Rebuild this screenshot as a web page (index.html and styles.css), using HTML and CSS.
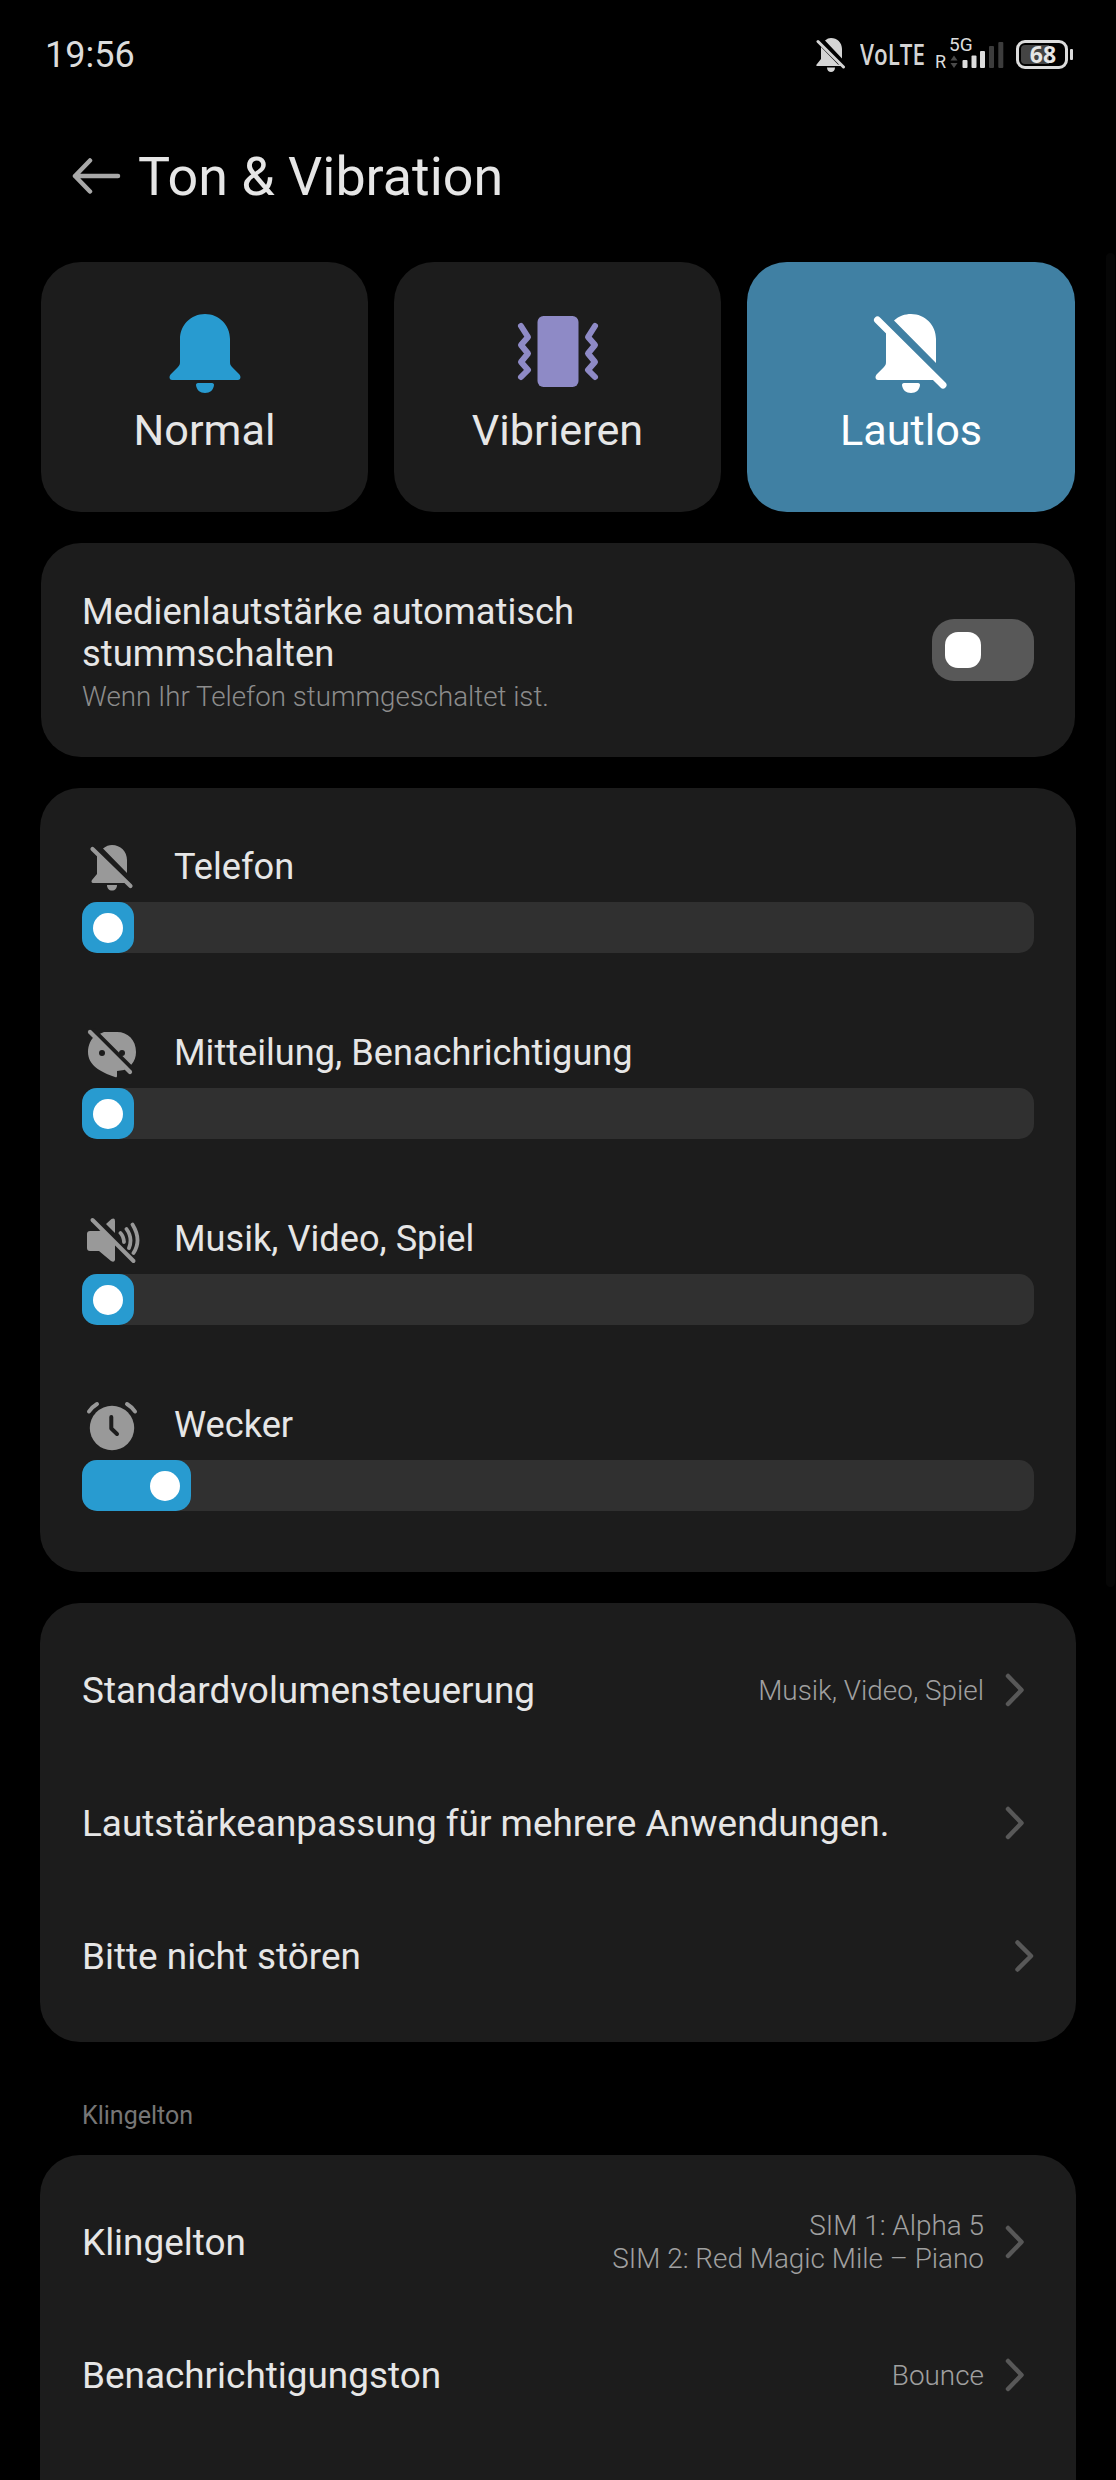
FILE: index.html
```html
<!DOCTYPE html>
<html lang="de">
<head>
    <meta charset="UTF-8">
    <meta name="viewport" content="width=device-width, initial-scale=1.0">
    <title>Ton &amp; Vibration</title>
    <link rel="stylesheet" href="styles.css">
</head>
<body>
    <!-- Status bar -->
    <div class="status-bar">
        <span class="time">19:56</span>
        <div class="status-icons">
            <svg class="status-bell" width="30" height="34" viewBox="0 0 30 34">
                <path d="M9 2.500C11 0.800 13 0 15 0C21 0 26 4.500 26 11V20.500ZM5 9L22 26.500H25V28H1C0 28 0 27 1 26L5 21Z" fill="#d4d4d4"/>
                <path d="M2 3.500L27.500 29" stroke="#d4d4d4" stroke-width="3" stroke-linecap="round"/>
                <path d="M11 29.500H19C19 32.500 17 34 15 34C13 34 11 32.500 11 29.500Z" fill="#d4d4d4"/>
            </svg>
            <span class="volte">VoLTE</span>
            <div class="signal">
                <span class="roaming">R</span>
                <span class="network">5G</span>
                <svg width="54" height="28" viewBox="0 0 54 28">
                    <path d="M0.500 19.500L4 14.500L7.500 19.500ZM0.500 22L4 27L7.500 22Z" fill="#4a4a4a"/>
                    <rect x="12.500" y="19" width="5" height="8" rx="1" fill="#dcdcdc"/>
                    <rect x="21.500" y="14.500" width="5" height="12.500" rx="1" fill="#dcdcdc"/>
                    <rect x="30" y="10" width="5" height="17" rx="1" fill="#dcdcdc"/>
                    <rect x="39" y="5" width="5" height="22" rx="1" fill="#3c3c3c"/>
                    <rect x="48.300" y="1" width="5" height="26" rx="1" fill="#3c3c3c"/>
                </svg>
            </div>
            <div class="battery"><span class="battery-level">68</span></div>
        </div>
    </div>

    <div class="header">
        <svg width="50" height="38" viewBox="0 0 50 38" fill="none" stroke="#a8a8a8" stroke-width="4.500" stroke-linecap="round" stroke-linejoin="round">
            <path d="M46 19H3M18 3.500L3 19L18 34.500"/>
        </svg>
        <h1>Ton &amp; Vibration</h1>
    </div>

    <div class="container">
        <!-- Sound modes -->
        <div class="modes">
            <div class="mode">
                <svg width="84" height="84" viewBox="0 0 84 84" fill="#289bd0">
                    <path d="M42 2C28 2 17 13 17 27V50C17 52 16.500 53.500 15 55L8 62C5.500 64.500 6.500 68 9 68H75C77.500 68 78.500 64.500 76 62L69 55C67.500 53.500 67 52 67 50V27C67 13 56 2 42 2Z"/>
                    <path d="M35 71H49C50.500 71 51 72 51 73C50.500 78 47 81 42 81C37 81 33.500 78 33 73C33 72 33.500 71 35 71Z"/>
                </svg>
                <span>Normal</span>
            </div>
            <div class="mode">
                <svg width="84" height="84" viewBox="0 0 84 84">
                    <rect x="21.500" y="4" width="41" height="71" rx="6" fill="#8e8ac6"/>
                    <path d="M5 14L12 25L5 33L12 41.500L5 50L12 58L5 65M79 14L72 25L79 33L72 41.500L79 50L72 58L79 65" fill="none" stroke="#8e8ac6" stroke-width="6" stroke-linecap="round" stroke-linejoin="round"/>
                </svg>
                <span>Vibrieren</span>
            </div>
            <div class="mode active">
                <svg width="84" height="84" viewBox="0 0 84 84" fill="#fff">
                    <path d="M25 8.500C30 4 36 2 42 2C56 2 67 13 67 27V51ZM17 18L66 68H9C6.500 68 5.500 64.500 8 62L15 55C16.500 53.500 17 52 17 50Z"/>
                    <path d="M8.500 8L74 73" stroke="#fff" stroke-width="7" stroke-linecap="round"/>
                    <path d="M35 71H49C50.500 71 51 72 51 73C50.500 78 47 81 42 81C37 81 33.500 78 33 73C33 72 33.500 71 35 71Z"/>
                </svg>
                <span>Lautlos</span>
            </div>
        </div>

        <div class="card mute-card">
            <div class="mute-text">
                <p class="label">Medienlautstärke automatisch stummschalten</p>
                <p class="description">Wenn Ihr Telefon stummgeschaltet ist.</p>
            </div>
            <div class="switch"><div class="switch-thumb"></div></div>
        </div>

        <!-- Volume sliders -->
        <div class="card wide volume-card">
            <div class="volume">
                <div class="volume-head">
                    <svg width="60" height="60" viewBox="0 0 60 60" fill="#999">
                        <path d="M21 10.500C24 8 27 7 30 7C38.500 7 45 13.500 45 22V35ZM15 17L44 45H11C9.500 45 9 43.500 10 42L15 36Z"/>
                        <path d="M10.500 11L48.500 48" stroke="#999" stroke-width="4.200" stroke-linecap="round"/>
                        <path d="M25 47H35C35 50.500 33 52.500 30 52.500C27 52.500 25 50.500 25 47Z"/>
                    </svg>
                    <span class="label">Telefon</span>
                </div>
                <div class="slider"><div class="slider-fill"><div class="slider-thumb"></div></div></div>
            </div>
            <div class="volume">
                <div class="volume-head">
                    <svg width="60" height="60" viewBox="0 0 60 60">
                        <path d="M22 8H35C46 8 54 16 54 28C54 33 52.500 37 49.500 40.500L42 46L35 47V52C35 53.500 34 53.500 33 53C18 48 6 41 6 28C6 21 9 15 13 12Z" fill="#999"/>
                        <circle cx="20" cy="29" r="3" fill="#1c1c1c"/>
                        <circle cx="40" cy="29" r="3" fill="#1c1c1c"/>
                        <path d="M11 5.500L53 47.500" stroke="#1c1c1c" stroke-width="4"/>
                        <path d="M8 8L48 48" stroke="#999" stroke-width="4.200" stroke-linecap="round"/>
                    </svg>
                    <span class="label">Mitteilung, Benachrichtigung</span>
                </div>
                <div class="slider"><div class="slider-fill"><div class="slider-thumb"></div></div></div>
            </div>
            <div class="volume">
                <div class="volume-head">
                    <svg width="60" height="60" viewBox="0 0 60 60" fill="#999">
                        <path d="M24 14L29.500 9Q33 7.500 33 11V23ZM8 21H17L21 19.500L33 31.500V50Q32 53 29 51L17 41H8Q5 41 5 38V24Q5 21 8 21Z"/>
                        <path d="M10.500 10L51.500 51" stroke="#999" stroke-width="4" stroke-linecap="round"/>
                        <path d="M38.500 23Q41.500 26 42 32M44.500 19Q51 28 47 38M50.500 14.500Q60 30 51.500 43" fill="none" stroke="#999" stroke-width="3.800" stroke-linecap="round"/>
                    </svg>
                    <span class="label">Musik, Video, Spiel</span>
                </div>
                <div class="slider"><div class="slider-fill"><div class="slider-thumb"></div></div></div>
            </div>
            <div class="volume">
                <div class="volume-head">
                    <svg width="60" height="60" viewBox="0 0 60 60">
                        <circle cx="30" cy="32" r="22.200" fill="#999"/>
                        <path d="M29.300 21V32.500L35 38" fill="none" stroke="#1c1c1c" stroke-width="4" stroke-linecap="round" stroke-linejoin="round"/>
                        <path d="M7 15.500Q10 11 15 8M45 8Q50 11 53 15.500" fill="none" stroke="#999" stroke-width="4" stroke-linecap="round"/>
                    </svg>
                    <span class="label">Wecker</span>
                </div>
                <div class="slider"><div class="slider-fill alarm-fill"><div class="slider-thumb"></div></div></div>
            </div>
        </div>

        <div class="card wide list">
            <div class="row">
                <span class="label">Standardvolumensteuerung</span>
                <span class="value">Musik, Video, Spiel</span>
                <svg class="arrow" width="20" height="34" viewBox="0 0 20 34"><path d="M3 3L16.500 17L3 31"/></svg>
            </div>
            <div class="row">
                <span class="label">Lautstärkeanpassung für mehrere Anwendungen.</span>
                <svg class="arrow" width="20" height="34" viewBox="0 0 20 34"><path d="M3 3L16.500 17L3 31"/></svg>
            </div>
            <div class="row last-row">
                <span class="label">Bitte nicht stören</span>
                <svg class="arrow" width="20" height="34" viewBox="0 0 20 34"><path d="M3.500 3.500L17 17L3.500 30.500"/></svg>
            </div>
        </div>

        <h2>Klingelton</h2>
        <div class="card wide list ringtones">
            <div class="row">
                <span class="label">Klingelton</span>
                <span class="value">SIM 1: Alpha 5<br>SIM 2: Red Magic Mile – Piano</span>
                <svg class="arrow" width="20" height="34" viewBox="0 0 20 34"><path d="M3 3L16.500 17L3 31"/></svg>
            </div>
            <div class="row">
                <span class="label">Benachrichtigungston</span>
                <span class="value">Bounce</span>
                <svg class="arrow" width="20" height="34" viewBox="0 0 20 34"><path d="M3 3L16.500 17L3 31"/></svg>
            </div>
        </div>
    </div>
    <div class="scrollbar"></div>
</body>
</html>
```
FILE: styles.css
```css
* {
    box-sizing: border-box;
}

body {
    font-family: Roboto, sans-serif;
    background-color: #000;
    color: #e6e6e6;
    margin: 0;
    position: relative;
}

p, h1, h2 {
    margin: 0;
    font-weight: 400;
}

svg {
    display: block;
    flex-shrink: 0;
}

/* Status bar */
.status-bar {
    height: 108px;
    padding: 0 42px 0 45px;
    display: flex;
    justify-content: space-between;
    align-items: center;
}

.time {
    font-size: 36px;
    line-height: 40px;
    padding-top: 2px;
    color: #dcdcdc;
}

.status-icons {
    display: flex;
    align-items: center;
}

.status-bell {
    margin-top: 2px;
}

.volte {
    width: 64px;
    font-family: "Open Sans", sans-serif;
    font-size: 28px;
    font-weight: 600;
    line-height: 40px;
    color: #d4d4d4;
    margin-left: 14px;
    transform: scaleX(0.8);
    transform-origin: left;
}

.signal {
    width: 69px;
    height: 34px;
    margin-left: 11px;
    margin-bottom: 4px;
    display: flex;
    align-items: flex-end;
    justify-content: space-between;
    position: relative;
}

.roaming {
    font-size: 18px;
    line-height: 15px;
    color: #dcdcdc;
}

.network {
    position: absolute;
    left: 14px;
    top: 0;
    font-size: 19px;
    line-height: 20px;
    color: #dcdcdc;
}

.battery {
    width: 52px;
    height: 29px;
    margin-left: 12px;
    margin-right: 6px;
    border: 3px solid #dcdcdc;
    border-radius: 9px;
    padding: 2px;
    position: relative;
}

.battery::after {
    content: "";
    position: absolute;
    right: -8px;
    top: 6px;
    width: 3px;
    height: 11px;
    border-radius: 1px;
    background-color: #dcdcdc;
}

.battery-level {
    display: block;
    width: 42px;
    height: 19px;
    padding-left: 2px;
    border-radius: 4px;
    background: linear-gradient(to right, #444 28px, transparent 28px);
    font-family: "Open Sans", sans-serif;
    font-size: 23px;
    font-weight: 700;
    line-height: 19px;
    text-align: center;
}

/* Page title */
.header {
    height: 154px;
    padding: 0 0 18px 72px;
    display: flex;
    align-items: center;
    gap: 16px;
}

.header h1 {
    font-size: 53.8px;
    line-height: 64px;
    padding-top: 1px;
}

.container {
    padding: 0 41px;
}

.modes {
    display: grid;
    grid-template-columns: 327px 327px 1fr;
    gap: 26px;
    height: 250px;
    margin-bottom: 31px;
}

.mode {
    background-color: #1c1c1c;
    border-radius: 40px;
    padding-top: 50px;
    display: flex;
    flex-direction: column;
    align-items: center;
    font-size: 43.2px;
    line-height: 50px;
    gap: 10px;
}

.mode.active {
    background-color: #4080a3;
    color: #fff;
}

.card {
    background-color: #1c1c1c;
    border-radius: 40px;
    padding: 0 41px;
    margin-bottom: 31px;
}

.card.wide {
    margin-left: -1px;
    margin-right: -1px;
    padding: 0 42px;
}

.label {
    font-size: 36.2px;
    line-height: 42px;
}

.card.mute-card {
    height: 214px;
    display: flex;
    align-items: center;
    justify-content: space-between;
}

.mute-text {
    width: 600px;
    padding-top: 5px;
}

.mute-text .label {
    font-size: 36.4px;
}

.description {
    font-size: 27.7px;
    font-weight: 300;
    line-height: 36px;
    margin-top: 4px;
    color: #8c8c8c;
}

.switch {
    width: 102px;
    height: 62px;
    padding: 13px;
    border-radius: 22px;
    background-color: #585858;
}

.switch-thumb {
    width: 36px;
    height: 36px;
    border-radius: 13px;
    background-color: #fff;
}

/* Volume sliders */
.card.volume-card {
    height: 784px;
    padding-top: 50px;
}

.volume {
    height: 186px;
}

.volume-head {
    height: 60px;
    margin-bottom: 4px;
    display: flex;
    align-items: center;
    gap: 32px;
}

.volume-head .label {
    padding-bottom: 2px;
}

.slider {
    height: 51px;
    border-radius: 15px;
    background-color: #303030;
}

.slider-fill {
    width: 52px;
    height: 51px;
    padding-right: 11px;
    border-radius: 15px;
    background-color: #289bd0;
    display: flex;
    align-items: center;
    justify-content: flex-end;
}

.alarm-fill {
    width: 109px;
}

.slider-thumb {
    width: 30px;
    height: 30px;
    border-radius: 50%;
    background-color: #fff;
}

/* Setting rows */
.card.list {
    height: 439px;
    padding-top: 20px;
}

.card.ringtones {
    height: 325px;
    margin-bottom: 0;
    border-radius: 40px 40px 0 0;
}

.row {
    height: 133px;
    padding-right: 9px;
    display: flex;
    align-items: center;
}

.last-row {
    padding-right: 0;
}

.row .label {
    font-size: 36.9px;
    padding-top: 3px;
}

.value {
    margin-left: auto;
    padding-top: 1px;
    font-size: 27.9px;
    font-weight: 300;
    line-height: 33px;
    text-align: right;
    color: #a0a0a0;
}

.arrow {
    margin-left: auto;
    fill: none;
    stroke: #585858;
    stroke-width: 4.5;
    stroke-linecap: round;
    stroke-linejoin: round;
}

.value + .arrow {
    margin-left: 21px;
}

h2 {
    font-size: 25px;
    line-height: 30px;
    height: 82px;
    padding: 28px 0 0 41px;
    color: #767676;
}

.scrollbar {
    position: absolute;
    right: 1px;
    top: 253px;
    width: 9px;
    height: 1334px;
    border-radius: 5px;
    background-color: #060606;
}
```
